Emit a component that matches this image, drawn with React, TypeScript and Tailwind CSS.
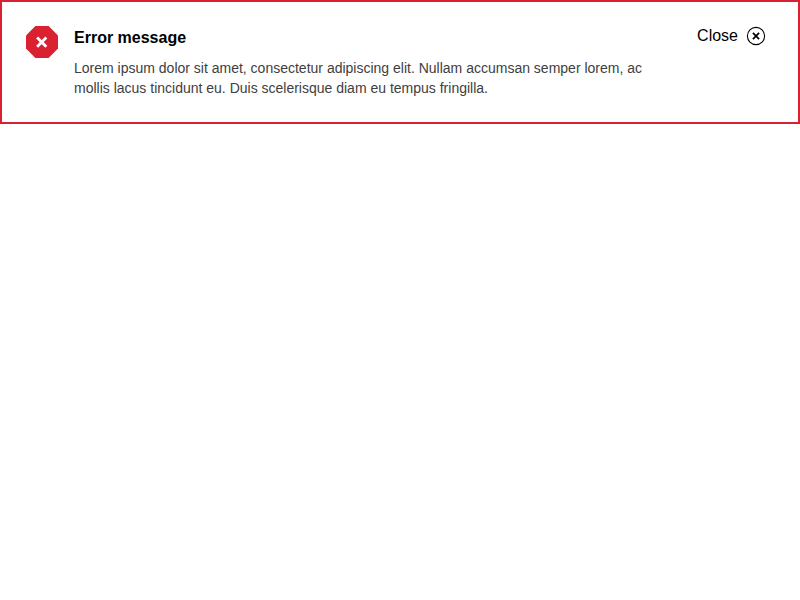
export default function App() {
  return (
    <div className="flex h-[124px] w-full items-start border-2 border-[#da2131] bg-white p-6 font-['Liberation_Sans',Arial,sans-serif]">
      <svg className="h-8 w-8 shrink-0" viewBox="0 0 32 32">
        <path d="M9.4 0h13.2L32 9.4v13.2L22.6 32H9.4L0 22.6V9.4z" fill="#da2131" />
        <path d="M11.1 11.6l9.2 9.2M20.3 11.6l-9.2 9.2" stroke="#fff" strokeWidth="2.8" fill="none" />
      </svg>
      <div className="ml-4 w-[584px]">
        <h2 className="text-base leading-6 font-bold text-black">Error message</h2>
        <p className="mt-2 text-sm leading-5 text-[#404040]">
          Lorem ipsum dolor sit amet, consectetur adipiscing elit. Nullam accumsan semper lorem, ac mollis lacus tincidunt eu. Duis scelerisque diam eu tempus fringilla.
        </p>
      </div>
      <button className="mr-2 ml-auto flex h-5 items-center gap-2 text-base leading-5 text-black">
        <span>Close</span>
        <svg className="h-5 w-5" viewBox="0 0 20 20" fill="none" stroke="#000">
          <circle cx="10" cy="10" r="8.6" strokeWidth="1.1" />
          <path d="M6.9 6.9l6.2 6.2M13.1 6.9l-6.2 6.2" strokeWidth="1.7" />
        </svg>
      </button>
    </div>
  );
}
